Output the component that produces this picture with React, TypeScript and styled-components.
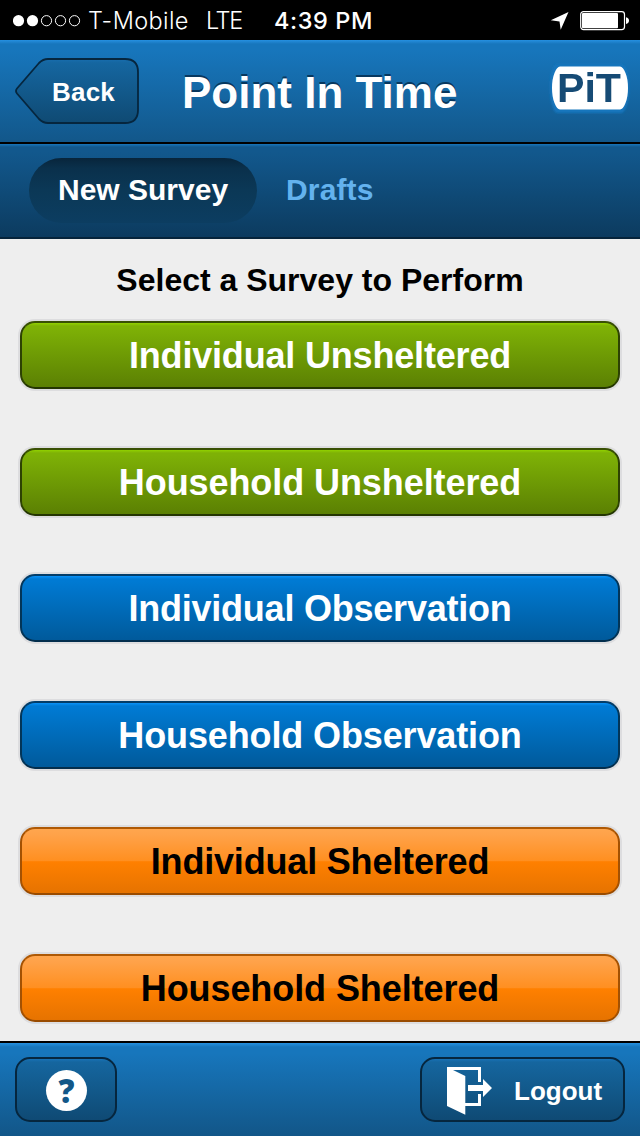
import React from "react";
import styled, { createGlobalStyle } from "styled-components";

const Global = createGlobalStyle`
  * { box-sizing: border-box; }
  body { margin: 0; background: #eeeeee; }
  button { border: 0; padding: 0; background: none; font: inherit; }
`;

const Screen = styled.div`
  width: 640px;
  height: 1136px;
  display: flex;
  flex-direction: column;
  overflow: hidden;
  background: #eeeeee;
  font-family: "Liberation Sans", Arial, sans-serif;
  font-weight: 700;
`;

const Label = styled.span<{ $spacing?: number; $x?: number; $y?: number }>`
  letter-spacing: ${(p) => p.$spacing ?? 0}px;
  transform: translate(${(p) => p.$x ?? 0}px, ${(p) => p.$y ?? 0}px);
  white-space: nowrap;
`;

const StatusBar = styled.div`
  height: 40px;
  flex: none;
  display: flex;
  align-items: center;
  padding: 1px 10.5px 0 13px;
  background: #000;
  color: #fff;
  font-family: Inter, sans-serif;
  font-size: 23.5px;
  line-height: 40px;
`;

const Signal = styled.svg`
  width: 68px;
  height: 12px;
  margin-right: 7px;
`;

const Carrier = styled.span`
  width: 118px;
  font-weight: 300;
  letter-spacing: 0.4px;
`;

const Network = styled.span`
  width: 68px;
  font-weight: 300;
  letter-spacing: -1.4px;
`;

const Clock = styled.span`
  flex: 1;
  font-weight: 500;
  letter-spacing: 0.6px;
`;

const Location = styled.svg`
  width: 19px;
  height: 19px;
  margin-right: 11px;
`;

const Battery = styled.svg`
  width: 50px;
  height: 20px;
`;

const Header = styled.header`
  height: 104px;
  flex: none;
  display: flex;
  align-items: center;
  padding: 0 12px 0 15px;
  border-bottom: 2px solid #000;
  background: linear-gradient(#2590e0 0, #1776bc 4px, #1776bc 10px, #12578a 100%);
  color: #fff;
`;

const BackButton = styled.button`
  position: relative;
  width: 124px;
  height: 66px;
  flex: none;
  display: flex;
  align-items: center;
  padding-left: 37px;
  color: #fff;
  font-size: 26px;
`;

const BackShape = styled.svg`
  position: absolute;
  inset: 0;
`;

const Title = styled.h1`
  flex: 1;
  margin: 0;
  padding: 4px 0 0 43px;
  font-size: 44px;
  line-height: 56px;
  display: flex;
  text-shadow: 0 -2px 0 rgba(0, 25, 50, 0.65);
`;

const Logo = styled.svg`
  width: 84px;
  height: 52px;
  margin: -7px -4px 0 0;
`;

const Tabs = styled.nav`
  height: 95px;
  flex: none;
  display: flex;
  align-items: flex-start;
  padding: 14px 29px 0;
  border-bottom: 2px solid #06243b;
  background: linear-gradient(#1776bc 0, #12588d 3px, #12588d 8px, #0c3b5f 100%);
`;

const Tab = styled.button<{ $active?: boolean }>`
  height: 65px;
  padding: 0 29px;
  display: flex;
  align-items: center;
  border-radius: 33px;
  font-size: 30px;
  width: ${(p) => (p.$active ? "228px" : "auto")};
  color: ${(p) => (p.$active ? "#fff" : "#63b2ee")};
  background: ${(p) =>
    p.$active ? "linear-gradient(#08253b 0, #0a304b 10px, #0b3856 32px, #0c3d61 100%)" : "none"};
`;

const Content = styled.main`
  flex: 1;
  display: flex;
  flex-direction: column;
  padding: 24px 20px 0;
`;

const Prompt = styled.h2`
  margin: 0 0 22px;
  font-size: 32px;
  line-height: 36px;
  color: #000;
  display: flex;
  justify-content: center;
`;

const List = styled.div`
  display: flex;
  flex-direction: column;
  gap: 58.6px;
`;

const tones = {
  green: {
    border: "#395004 #2d4203 #243602",
    fill: "linear-gradient(#91d100 0, #7eb106 3px, #7eb106 5px, #5b8003 100%)",
    text: "#fff",
  },
  blue: {
    border: "#033d69 #033557 #032e4d",
    fill: "linear-gradient(#0b92f8 0, #007ad3 3px, #007ad3 5px, #005a9b 100%)",
    text: "#fff",
  },
  orange: {
    border: "#ae5905 #a35102 #994b00",
    fill: "linear-gradient(#ffa64e 0, #ffa249 6px, #ff8f20 50%, #ff8000 51%, #e67300 100%)",
    text: "#000",
  },
};

const SurveyButton = styled.button<{ $tone: keyof typeof tones }>`
  height: 68px;
  flex: none;
  display: flex;
  align-items: center;
  justify-content: center;
  border: 2px solid;
  border-color: ${(p) => tones[p.$tone].border};
  border-radius: 15px;
  background: ${(p) => tones[p.$tone].fill};
  background-origin: padding-box;
  box-shadow: 0 0 0 2px #dddddf;
  color: ${(p) => tones[p.$tone].text};
  font-size: 36px;
`;

const Footer = styled.footer`
  height: 95px;
  flex: none;
  display: flex;
  justify-content: space-between;
  align-items: flex-start;
  padding: 14px 15px 0;
  border-top: 2px solid #000;
  background: linear-gradient(#2590e0 0, #1776bc 4px, #1776bc 10px, #125688 100%);
`;

const FooterButton = styled.button<{ $width: number }>`
  width: ${(p) => p.$width}px;
  height: 65px;
  display: flex;
  align-items: center;
  border: 2px solid #06263e;
  border-radius: 15px;
  background: linear-gradient(#1871b5 0, #15669f 3px, #0f4a74 100%);
  background-origin: padding-box;
  color: #fff;
  font-size: 26px;
`;

const HelpIcon = styled.svg`
  width: 41px;
  height: 41px;
  margin: 2px 0 0 28.5px;
  overflow: visible;
  font-family: "Open Sans", "Noto Sans", sans-serif;
  font-size: 34px;
  font-weight: 800;
`;

const DoorIcon = styled.svg`
  width: 46px;
  height: 48px;
  margin: 2px 21px 0 25px;
`;

const surveys: { name: string; tone: keyof typeof tones; spacing: number }[] = [
  { name: "Individual Unsheltered", tone: "green", spacing: -0.18 },
  { name: "Household Unsheltered", tone: "green", spacing: -0.08 },
  { name: "Individual Observation", tone: "blue", spacing: -0.22 },
  { name: "Household Observation", tone: "blue", spacing: -0.13 },
  { name: "Individual Sheltered", tone: "orange", spacing: -0.18 },
  { name: "Household Sheltered", tone: "orange", spacing: -0.08 },
];

export default function App() {
  return (
    <Screen>
      <Global />
      <StatusBar>
        <Signal viewBox="0 0 68 12">
          {[0, 1, 2, 3, 4].map((i) => (
            <circle
              key={i}
              cx={5.5 + i * 14}
              cy={5.7}
              r={i < 2 ? 5.6 : 5.1}
              fill={i < 2 ? "#fff" : "none"}
              stroke={i < 2 ? "none" : "#fff"}
            />
          ))}
        </Signal>
        <Carrier>T-Mobile</Carrier>
        <Network>LTE</Network>
        <Clock>4:39 PM</Clock>
        <Location viewBox="0 0 19 19">
          <path d="M18.500 1 10.700 18.700 9.500 10.500.8 9.300Z" fill="#fff" />
        </Location>
        <Battery viewBox="0 0 50 20">
          <rect x="0.7" y="0.6" width="43.8" height="18" rx="2.8" fill="none" stroke="#fff" strokeWidth="1.2" />
          <rect x="2" y="2" width="36" height="15.3" rx="1" fill="#fff" />
          <path d="M46 6.200q3 .8 3 3.4t-3 3.4Z" fill="#fff" />
        </Battery>
      </StatusBar>

      <Header>
        <BackButton>
          <BackShape width="124" height="66" viewBox="0 0 124 66">
            <defs>
              <linearGradient id="backFill" x1="0" y1="0" x2="0" y2="1">
                <stop offset="0" stopColor="#186eaf" />
                <stop offset=".06" stopColor="#1566a0" />
                <stop offset="1" stopColor="#0f4a73" />
              </linearGradient>
            </defs>
            <path
              d="M33 1H110Q123 1 123 14V52Q123 65 110 65H33Q28 65 24 61L2 35.500Q0 33 2 30.500L24 5Q28 1 33 1Z"
              fill="url(#backFill)"
              stroke="#06263e"
              strokeWidth="1.8"
            />
          </BackShape>
          <Label $spacing={0.2} $y={1}>Back</Label>
        </BackButton>
        <Title>
          <Label>Point In Time</Label>
        </Title>
        <Logo viewBox="0 0 84 52">
          <defs>
            <filter id="soft" x="-10%" y="-10%" width="120%" height="120%">
              <feGaussianBlur stdDeviation="0.7" />
            </filter>
            <filter id="glow" x="-10%" y="-20%" width="120%" height="140%">
              <feGaussianBlur stdDeviation="1.2" />
            </filter>
          </defs>
          <path
            d="M9 2H73Q76 2 78 6 81 12 81 25.500 81 39 78 45 76 51 73 51H10Q6 51 5 45 2 39 2 25.500 2 12 5 6 6 2 9 2Z"
            fill="#1676bd"
            filter="url(#glow)"
          />
          <g filter="url(#soft)">
            <path
              d="M12 4.500H72Q75 4.500 77.500 11 80 17 80 26 80 35 77.500 41 75 47.500 72 47.500H12Q9 47.500 6.500 41 4 35 4 26 4 17 6.500 11 9 4.500 12 4.500Z"
              fill="#fff"
            />
            <text x="9" y="40" fontSize="41" fill="#174c75" textLength="64" lengthAdjust="spacingAndGlyphs">
              PiT
            </text>
          </g>
        </Logo>
      </Header>

      <Tabs>
        <Tab $active>
          <Label $y={-1}>New Survey</Label>
        </Tab>
        <Tab>
          <Label $spacing={0.15} $y={-1}>Drafts</Label>
        </Tab>
      </Tabs>

      <Content>
        <Prompt>
          <Label $y={-1}>Select a Survey to Perform</Label>
        </Prompt>
        <List>
          {surveys.map((s) => (
            <SurveyButton key={s.name} $tone={s.tone}>
              <Label $spacing={s.spacing} $y={1}>{s.name}</Label>
            </SurveyButton>
          ))}
        </List>
      </Content>

      <Footer>
        <FooterButton $width={102}>
          <HelpIcon viewBox="0 0 41 41">
            <circle cx="20.5" cy="20.5" r="20.5" fill="#fff" />
            <text x="20.5" y="33" textAnchor="middle" fill="#125788" textLength="16" lengthAdjust="spacingAndGlyphs">
              ?
            </text>
          </HelpIcon>
        </FooterButton>
        <FooterButton $width={205}>
          <DoorIcon viewBox="0 0 46 48" fill="#fff">
            <path d="M0 0H34V15H31V3H6L18.300 9V36H31V27H34V39H18.300V47.700L0 39Z" />
            <path d="M21 18H36V12L45 21 36 30V24H21Z" />
          </DoorIcon>
          <Label $y={2}>Logout</Label>
        </FooterButton>
      </Footer>
    </Screen>
  );
}
